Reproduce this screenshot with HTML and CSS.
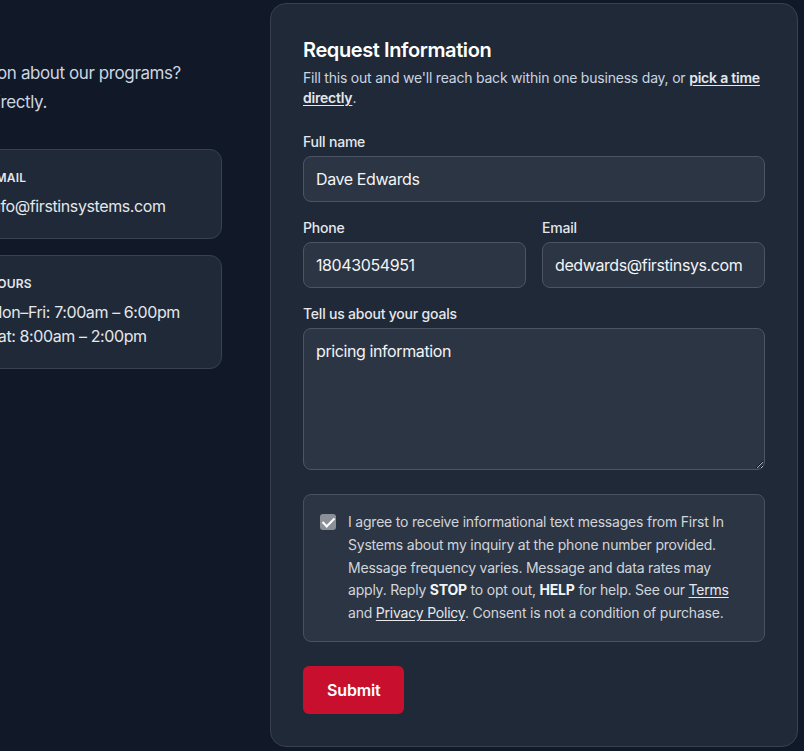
FILE: index.html
```html
<!DOCTYPE html>
<html lang="en">
<head>
    <meta charset="UTF-8">
    <meta name="viewport" content="width=device-width, initial-scale=1.0">
    <title>Contact - First In Systems</title>
    <link rel="stylesheet" href="styles.css">
</head>
<body>
    <main class="contact">
        <div class="contact-info">
            <h2>Get in Touch</h2>
            <p class="intro">Have a question or want more information about our programs? Prefer to talk? Give us a call or text us directly.</p>

            <div class="info-grid">
                <div class="info-card">
                    <span class="info-label">Phone</span>
                    <span class="info-value">(804) 305-4951</span>
                </div>
                <div class="info-card">
                    <span class="info-label">Email</span>
                    <span class="info-value">info@firstinsystems.com</span>
                </div>
                <div class="info-card">
                    <span class="info-label">Address</span>
                    <span class="info-value">Richmond, VA</span>
                </div>
                <div class="info-card">
                    <span class="info-label">Hours</span>
                    <span class="info-value">Mon–Fri: 7:00am – 6:00pm<br>Sat: 8:00am – 2:00pm</span>
                </div>
            </div>
        </div>

        <section class="form-card">
            <h3>Request Information</h3>
            <p class="form-note">Fill this out and we'll reach back within one business day, or <a href="#">pick a time directly</a>.</p>

            <form class="request-form">
                <div class="field">
                    <label for="fullName">Full name</label>
                    <input type="text" id="fullName" value="Dave Edwards">
                </div>

                <div class="field-row">
                    <div class="field">
                        <label for="phone">Phone</label>
                        <input type="tel" id="phone" value="18043054951">
                    </div>
                    <div class="field">
                        <label for="email">Email</label>
                        <input type="email" id="email" value="dedwards@firstinsys.com">
                    </div>
                </div>

                <div class="field">
                    <label for="goals">Tell us about your goals</label>
                    <textarea id="goals" rows="5">pricing information</textarea>
                </div>

                <label class="consent">
                    <input type="checkbox" checked>
                    <span>I agree to receive informational text messages from First In Systems about my inquiry at the phone number provided. Message frequency varies. Message and data rates may apply. Reply <strong>STOP</strong> to opt out, <strong>HELP</strong> for help. See our <a href="#">Terms</a> and <a href="#">Privacy Policy</a>. Consent is not a condition of purchase.</span>
                </label>

                <button type="submit" class="submit-btn">Submit</button>
            </form>
        </section>
    </main>
</body>
</html>
```

FILE: styles.css
```css
* {
    margin: 0;
    padding: 0;
    box-sizing: border-box;
}

body {
    font-family: Inter, "Noto Sans", sans-serif;
    letter-spacing: -0.025em;
    background-color: #111827;
    color: #e5e7eb;
    overflow: hidden;
}

.contact {
    display: flex;
    align-items: flex-start;
    gap: 48px;
    padding-top: 3px;
    margin-left: -304px;
}

/* left column */

.contact-info {
    width: 526px;
    flex-shrink: 0;
}

.contact-info h2 {
    font-size: 30px;
    line-height: 36px;
    font-weight: 700;
    color: #fff;
    margin-bottom: 20px;
}

.intro {
    font-size: 17px;
    line-height: 29px;
    color: #cbd5e1;
    margin-bottom: 32px;
}

.info-grid {
    display: grid;
    grid-template-columns: 1fr 1fr;
    gap: 16px;
}

.info-card {
    display: flex;
    flex-direction: column;
    gap: 8px;
    padding: 20px;
    background-color: #1f2937;
    border: 1px solid #374151;
    border-radius: 12px;
}

.info-label {
    font-size: 12px;
    line-height: 16px;
    font-weight: 600;
    text-transform: uppercase;
    letter-spacing: 0.02em;
    color: #e5e7eb;
}

.info-value {
    font-size: 16px;
    line-height: 24px;
    color: #e5e7eb;
}

/* form card */

.form-card {
    width: 528px;
    flex-shrink: 0;
    padding: 32px;
    background-color: #1f2937;
    border: 1px solid #374151;
    border-radius: 16px;
}

.form-card h3 {
    font-size: 20px;
    line-height: 28px;
    font-weight: 600;
    color: #fff;
    margin-bottom: 4px;
}

.form-note {
    font-size: 14px;
    line-height: 20px;
    letter-spacing: -0.015em;
    color: #cbd5e1;
    margin-bottom: 24px;
}

.form-note a {
    color: #e5e7eb;
    font-weight: 600;
    text-decoration: underline;
    text-underline-offset: 2px;
}

.request-form {
    display: flex;
    flex-direction: column;
    gap: 16px;
}

.field {
    display: flex;
    flex-direction: column;
    gap: 4px;
}

.field label {
    font-size: 14px;
    line-height: 20px;
    font-weight: 500;
    letter-spacing: -0.015em;
    color: #e5e7eb;
}

.field-row {
    display: grid;
    grid-template-columns: 1fr 1fr;
    gap: 16px;
}

.field input,
.field textarea {
    display: block;
    width: 100%;
    padding: 10px 12px;
    font-family: inherit;
    font-size: 16px;
    line-height: 24px;
    letter-spacing: inherit;
    color: #f3f4f6;
    background-color: #2c3544;
    border: 1px solid #4b5563;
    border-radius: 8px;
    outline: none;
}

.field textarea {
    resize: vertical;
}

.consent {
    display: flex;
    gap: 12px;
    margin-top: 8px;
    padding: 16px;
    font-size: 14px;
    line-height: 1.625;
    letter-spacing: -0.015em;
    color: #d1d5db;
    background-color: #2c3544;
    border: 1px solid #465163;
    border-radius: 8px;
}

.consent input {
    appearance: none;
    position: relative;
    flex-shrink: 0;
    width: 16px;
    height: 16px;
    margin-top: 3px;
    background-color: #8b9098;
    border-radius: 3px;
}

.consent input:checked::after {
    content: "";
    position: absolute;
    left: 5px;
    top: 1px;
    width: 5px;
    height: 10px;
    border: solid #fff;
    border-width: 0 2.5px 2.5px 0;
    transform: rotate(45deg);
}

.consent strong {
    color: #f3f4f6;
    font-weight: 700;
}

.consent a {
    color: #e5e7eb;
    text-decoration: underline;
    text-underline-offset: 2px;
}

.submit-btn {
    align-self: flex-start;
    margin-top: 8px;
    padding: 12px 24px;
    font-family: inherit;
    font-size: 16px;
    line-height: 24px;
    font-weight: 600;
    letter-spacing: -0.01em;
    color: #fff;
    background-color: #c8102e;
    border: none;
    border-radius: 6px;
    cursor: pointer;
}
```
